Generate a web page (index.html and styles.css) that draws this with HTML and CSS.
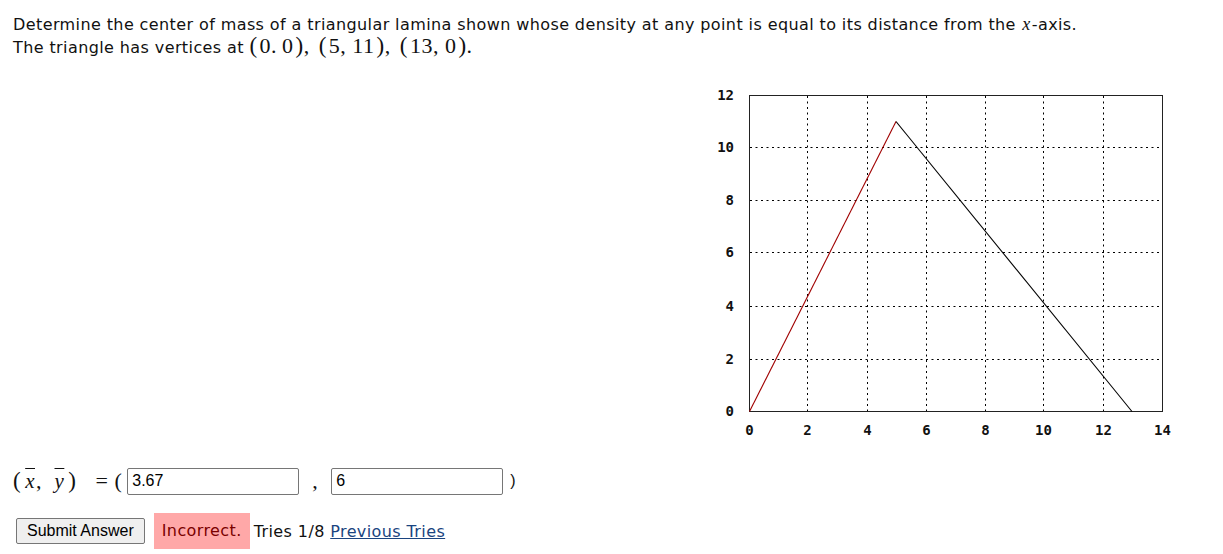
FILE: index.html
```html
<!DOCTYPE html>
<html>
<head>
<meta charset="utf-8">
<link rel="stylesheet" href="styles.css">
</head>
<body>
<div class="problem">
  <p class="stmt">Determine the center of mass of a triangular lamina shown whose density at any point is equal to its distance from the <span class="mi tx">x</span>-axis.<br>The triangle has vertices at <span class="math"><span class="paren">(</span><span class="in">0.&#8201;0</span><span class="paren">)</span>,<span class="sep"></span><span class="paren">(</span><span class="in">5, 11</span><span class="paren">)</span>,<span class="sep"></span><span class="paren">(</span><span class="in">13, 0</span><span class="paren">)</span>.</span></p>

  <div class="figure">
    <svg class="chart" width="470" height="362" viewBox="0 0 470 362" xmlns="http://www.w3.org/2000/svg">
      <g class="grid" stroke="#000" stroke-width="1" stroke-dasharray="2,3.5" fill="none">
        <line x1="97.5" y1="16" x2="97.5" y2="331"/>
        <line x1="157.5" y1="16" x2="157.5" y2="331"/>
        <line x1="216.5" y1="16" x2="216.5" y2="331"/>
        <line x1="275.5" y1="16" x2="275.5" y2="331"/>
        <line x1="333.5" y1="16" x2="333.5" y2="331"/>
        <line x1="393.5" y1="16" x2="393.5" y2="331"/>
        <line x1="40" y1="67.5" x2="452" y2="67.5"/>
        <line x1="40" y1="120.5" x2="452" y2="120.5"/>
        <line x1="40" y1="172.5" x2="452" y2="172.5"/>
        <line x1="40" y1="226.5" x2="452" y2="226.5"/>
        <line x1="40" y1="279.5" x2="452" y2="279.5"/>
      </g>
      <rect x="39.5" y="15.5" width="413" height="316" fill="none" stroke="#222" stroke-width="1"/>
      <line x1="39.5" y1="331.5" x2="186" y2="41.5" stroke="#a00000" stroke-width="1.1"/>
      <line x1="186" y1="41.5" x2="422" y2="331.5" stroke="#000" stroke-width="1.1"/>
      <g class="ylab" text-anchor="end">
        <text x="24" y="20">12</text>
        <text x="24" y="72">10</text>
        <text x="24" y="125">8</text>
        <text x="24" y="177">6</text>
        <text x="24" y="231">4</text>
        <text x="24" y="284">2</text>
        <text x="24" y="336">0</text>
      </g>
      <g class="xlab" text-anchor="middle">
        <text x="39.5" y="355">0</text>
        <text x="97.5" y="355">2</text>
        <text x="157.5" y="355">4</text>
        <text x="216.5" y="355">6</text>
        <text x="275.5" y="355">8</text>
        <text x="333.5" y="355">10</text>
        <text x="393.5" y="355">12</text>
        <text x="452.5" y="355">14</text>
      </g>
    </svg>
  </div>

  <div class="answer">
    <span class="math lhs"><span class="paren">(</span><span class="in"><span class="bar mi">x</span>,&ensp;<span class="bar mi">y</span></span><span class="paren">)</span></span>
    <span class="math eq">=</span>
    <span class="math open">(</span>
    <input class="field" type="text" value="3.67">
    <span class="math comma">,</span>
    <input class="field" type="text" value="6">
    <span class="close">)</span>
  </div>

  <div class="actions">
    <button class="submit">Submit Answer</button>
    <span class="feedback">Incorrect.</span>
    <span class="tries">Tries 1/8 <a href="#" class="prev">Previous Tries</a></span>
  </div>
</div>
</body>
</html>
```
FILE: styles.css
```css
html, body {
  margin: 0;
  padding: 0;
  background: #fff;
}
body {
  font-family: Verdana, "DejaVu Sans", sans-serif;
  font-size: 16px;
  letter-spacing: 0.4px;
  color: #111;
}
.problem {
  padding: 13px 13px 0 13px;
}
.stmt {
  margin: 0;
  line-height: 23px;
}
.stmt .math {
  line-height: 0;
}
.math {
  font-family: "Liberation Serif", "DejaVu Serif", serif;
  font-size: 22px;
  letter-spacing: 0.5px;
}
.mi {
  font-family: "Liberation Serif", "DejaVu Serif", serif;
  font-style: italic;
  font-size: 21px;
}
.mi.tx {
  font-size: 18px;
  padding: 0 1px;
}
.paren {
  font-size: 23px;
}
.in {
  padding: 0 3px;
}
.stmt .in {
  padding: 0 2px;
}
.sep {
  display: inline-block;
  width: 9px;
}
.figure {
  display: flex;
  margin-top: 21px;
  padding-left: 697px;
  height: 362px;
}
.chart {
  display: block;
}
.chart text {
  font-family: "DejaVu Sans Mono", monospace;
  font-weight: bold;
  font-size: 14px;
  letter-spacing: 0;
  fill: #111;
}
.answer {
  display: flex;
  align-items: center;
  margin-top: 25px;
  height: 28px;
}
.lhs {
  margin-left: 0;
}
.bar {
  text-decoration: overline;
  text-decoration-thickness: 1px;
  padding: 0 1px;
}
.eq {
  margin-left: 19px;
  margin-right: 6px;
}
.open {
  margin-right: 5px;
}
.field {
  width: 172px;
  height: 27px;
  box-sizing: border-box;
  border: 1px solid #767676;
  border-radius: 2px;
  font-family: Arial, "Liberation Sans", sans-serif;
  font-size: 16px;
  letter-spacing: 0;
  padding: 0 4px;
  color: #000;
  margin: 0;
}
.comma {
  margin: 0 13px 0 13px;
}
.close {
  font-family: Arial, "Liberation Sans", sans-serif;
  margin-left: 7px;
}
.actions {
  display: flex;
  align-items: center;
  margin-top: 18px;
  height: 36px;
}
.submit {
  font-family: Arial, "Liberation Sans", sans-serif;
  font-size: 16px;
  letter-spacing: 0;
  height: 26px;
  padding: 0 10px;
  margin: 0 9px 0 3px;
  background: #efefef;
  border: 1px solid #767676;
  border-radius: 2px;
  color: #000;
}
.feedback {
  background: #ffa8a8;
  color: #7a0000;
  height: 36px;
  line-height: 36px;
  padding: 0 8px;
  margin-right: 4px;
}
.tries {
  color: #111;
}
.prev {
  color: #1a4480;
  text-decoration: underline;
}
```
